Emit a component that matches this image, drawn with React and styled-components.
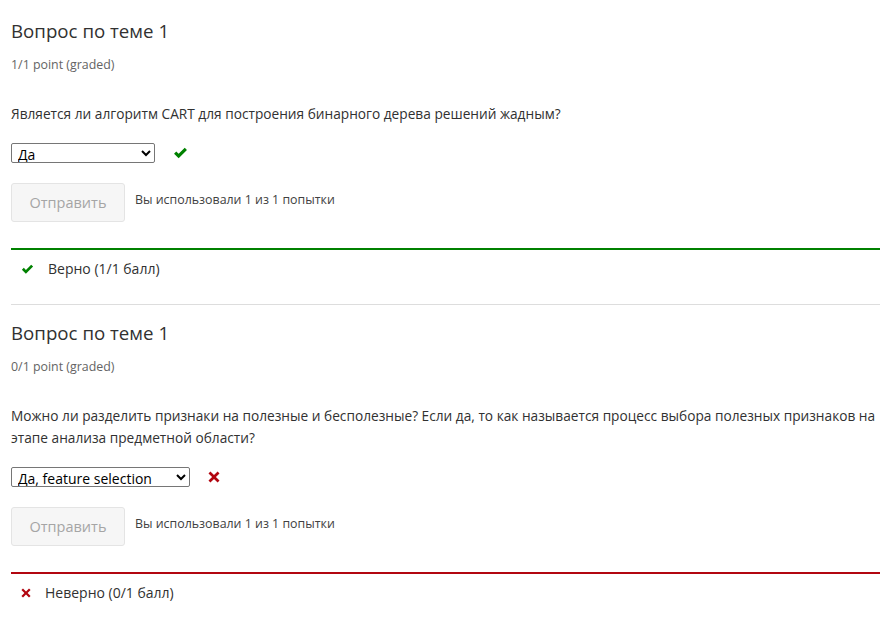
import React from "react";
import styled, { createGlobalStyle } from "styled-components";

const Global = createGlobalStyle`
  html, body { margin: 0; padding: 0; background: #fff; }
  body { font-family: "Open Sans", "Noto Sans", sans-serif; color: #313131; }
`;

const Page = styled.div`
  padding: 0 15px 0 11px;
`;

const Problem = styled.section`
  padding-top: ${(p) => (p.$first ? 19 : 16)}px;
  border-bottom: ${(p) => (p.$last ? "none" : "1px solid #dddddd")};
`;

const Title = styled.h3`
  margin: 0;
  font-size: 18.7px;
  font-weight: 400;
  line-height: 24px;
  color: #313131;
`;

const Points = styled.div`
  margin-top: 13px;
  font-size: 12.4px;
  line-height: 18px;
  color: #646464;
`;

const Question = styled.p`
  margin: 29px 0 0;
  font-size: 13.7px;
  line-height: 22px;
  color: #313131;
`;

const AnswerRow = styled.div`
  display: flex;
  align-items: center;
  gap: 18px;
  margin-top: 18px;
`;

const Select = styled.select`
  width: ${(p) => p.$w}px;
  height: 20px;
  font-family: "Open Sans", sans-serif;
  font-size: 14px;
  color: #000;
  border: 1px solid #767676;
  border-radius: 2px;
  background: #fff;
  padding: 0 2px;
  margin: 0;
`;

const Actions = styled.div`
  display: flex;
  align-items: center;
  gap: 10px;
  margin-top: 19px;
`;

const SubmitButton = styled.button`
  width: 114px;
  height: 39px;
  border: 1px solid #e4e4e4;
  border-radius: 3px;
  background: #f6f6f6;
  color: #a5a5a5;
  font-family: "Open Sans", sans-serif;
  font-size: 14.5px;
  padding: 0;
  margin-top: 1px;
`;

const Attempts = styled.span`
  font-size: 12.4px;
  color: #414141;
  margin-top: -5px;
`;

const Feedback = styled.div`
  margin-top: 26px;
  border-top: 2px solid ${(p) => p.$color};
  display: flex;
  align-items: center;
  gap: 14px;
  padding: 9px 0 ${(p) => p.$bottom}px 10px;
  line-height: 20px;
  font-size: 14px;
  color: #313131;
`;

const Check = ({ size = 15 }) => (
  <svg width={size} height={size * 0.8} viewBox="0 0 16 13">
    <path d="M1 7.2 L3.4 4.8 L6 7.4 L12.6 0.8 L15 3.2 L6 12.2 Z" fill="#008100" />
  </svg>
);

const Cross = ({ size = 12 }) => (
  <svg width={size} height={size} viewBox="0 0 12 12">
    <path
      d="M2.4 0.5 L6 4.1 L9.6 0.5 L11.5 2.4 L7.9 6 L11.5 9.6 L9.6 11.5 L6 7.9 L2.4 11.5 L0.5 9.6 L4.1 6 L0.5 2.4 Z"
      fill="#b20610"
    />
  </svg>
);

const problems = [
  {
    points: "1/1 point (graded)",
    question:
      "Является ли алгоритм CART для построения бинарного дерева решений жадным?",
    answer: "Да",
    selectWidth: 144,
    correct: true,
  },
  {
    points: "0/1 point (graded)",
    question:
      "Можно ли разделить признаки на полезные и бесполезные? Если да, то как называется процесс выбора полезных признаков на этапе анализа предметной области?",
    answer: "Да, feature selection",
    selectWidth: 179,
    correct: false,
  },
];

export default function App() {
  return (
    <Page>
      <Global />
      {problems.map((p, i) => (
        <Problem key={i} $first={i === 0} $last={i === problems.length - 1}>
          <Title>Вопрос по теме 1</Title>
          <Points>{p.points}</Points>
          <Question>{p.question}</Question>
          <AnswerRow>
            <Select $w={p.selectWidth} defaultValue={p.answer}>
              <option>{p.answer}</option>
            </Select>
            {p.correct ? <Check /> : <Cross size={12} />}
          </AnswerRow>
          <Actions>
            <SubmitButton disabled>Отправить</SubmitButton>
            <Attempts>Вы использовали 1 из 1 попытки</Attempts>
          </Actions>
          {p.correct ? (
            <Feedback $color="#008100" $bottom={25}>
              <Check size={13} />
              Верно (1/1 балл)
            </Feedback>
          ) : (
            <Feedback $color="#b20610" $bottom={25}>
              <Cross size={10} />
              Неверно (0/1 балл)
            </Feedback>
          )}
        </Problem>
      ))}
    </Page>
  );
}
